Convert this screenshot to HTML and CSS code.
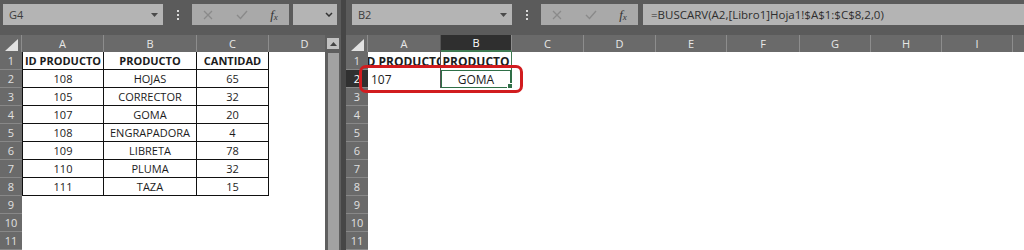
FILE: index.html
```html
<!DOCTYPE html>
<html lang="es">
<head>
    <meta charset="UTF-8">
    <title>BUSCARV entre libros</title>
    <link rel="stylesheet" href="styles.css">
</head>
<body>
<div class="app">
    <section class="pane left">
        <div class="toolbar">
            <div class="namebox"><span>G4</span><svg width="7" height="4"><polygon points="0,0 7,0 3.5,4" fill="#4a4a4a"/></svg></div>
            <div class="grip"><i></i><i></i><i></i></div>
            <div class="fxbox">
                <svg width="10" height="10"><path d="M1 1L9 9M9 1L1 9" stroke="#8a8a8a" stroke-width="1.3"/></svg>
                <svg width="12" height="10"><polyline points="1,5 4.5,8.5 11,1" fill="none" stroke="#8a8a8a" stroke-width="1.4"/></svg>
                <span class="fx"><i>f</i><sub>x</sub></span>
            </div>
            <div class="formula short"><svg width="8" height="5"><polyline points="1,1 4,4 7,1" fill="none" stroke="#333" stroke-width="1.5"/></svg></div>
        </div>
        <div class="body">
            <div class="sheet">
                <div class="row head">
                    <div class="corner"><svg width="13" height="12"><polygon points="0,12 13,12 13,0" fill="#e2e2e2"/></svg></div>
                    <div class="c ch a">A</div>
                    <div class="c ch b">B</div>
                    <div class="c ch cc">C</div>
                    <div class="c ch d">D</div>
                </div>
                <div class="row"><div class="rh">1</div><div class="c t a first bold">ID PRODUCTO</div><div class="c t b bold">PRODUCTO</div><div class="c t cc bold">CANTIDAD</div></div>
                <div class="row"><div class="rh">2</div><div class="c t a first">108</div><div class="c t b">HOJAS</div><div class="c t cc">65</div></div>
                <div class="row"><div class="rh">3</div><div class="c t a first">105</div><div class="c t b">CORRECTOR</div><div class="c t cc">32</div></div>
                <div class="row"><div class="rh">4</div><div class="c t a first">107</div><div class="c t b">GOMA</div><div class="c t cc">20</div></div>
                <div class="row"><div class="rh">5</div><div class="c t a first">108</div><div class="c t b">ENGRAPADORA</div><div class="c t cc">4</div></div>
                <div class="row"><div class="rh">6</div><div class="c t a first">109</div><div class="c t b">LIBRETA</div><div class="c t cc">78</div></div>
                <div class="row"><div class="rh">7</div><div class="c t a first">110</div><div class="c t b">PLUMA</div><div class="c t cc">32</div></div>
                <div class="row"><div class="rh">8</div><div class="c t a first">111</div><div class="c t b">TAZA</div><div class="c t cc">15</div></div>
                <div class="row"><div class="rh">9</div></div>
                <div class="row"><div class="rh">10</div></div>
                <div class="row"><div class="rh">11</div></div>
            </div>
            <div class="vscroll">
                <div class="up"><svg width="7" height="4"><polygon points="0,4 7,4 3.5,0" fill="#444"/></svg></div>
                <div class="thumb"></div>
            </div>
        </div>
    </section>

    <section class="pane right">
        <div class="toolbar">
            <div class="namebox"><span>B2</span><svg width="7" height="4"><polygon points="0,0 7,0 3.5,4" fill="#4a4a4a"/></svg></div>
            <div class="grip"><i></i><i></i><i></i></div>
            <div class="fxbox">
                <svg width="10" height="10"><path d="M1 1L9 9M9 1L1 9" stroke="#8a8a8a" stroke-width="1.3"/></svg>
                <svg width="12" height="10"><polyline points="1,5 4.5,8.5 11,1" fill="none" stroke="#8a8a8a" stroke-width="1.4"/></svg>
                <span class="fx"><i>f</i><sub>x</sub></span>
            </div>
            <div class="formula">=BUSCARV(A2,[Libro1]Hoja1!$A$1:$C$8,2,0)</div>
        </div>
        <div class="body">
            <div class="sheet">
                <div class="row head">
                    <div class="corner"><svg width="13" height="12"><polygon points="0,12 13,12 13,0" fill="#e2e2e2"/></svg></div>
                    <div class="c ch a">A</div>
                    <div class="c ch b active">B</div>
                    <div class="c ch cc">C</div>
                    <div class="c ch d">D</div>
                    <div class="c ch e">E</div>
                    <div class="c ch f">F</div>
                    <div class="c ch g">G</div>
                    <div class="c ch h">H</div>
                    <div class="c ch i">I</div>
                    <div class="c ch j"></div>
                </div>
                <div class="row"><div class="rh">1</div><div class="c a bold"><span>ID PRODUCTO</span></div><div class="c b bold col-b"><span>PRODUCTO</span></div></div>
                <div class="row"><div class="rh active">2</div><div class="c a num">107</div><div class="c b picked">GOMA</div></div>
                <div class="row"><div class="rh">3</div></div>
                <div class="row"><div class="rh">4</div></div>
                <div class="row"><div class="rh">5</div></div>
                <div class="row"><div class="rh">6</div></div>
                <div class="row"><div class="rh">7</div></div>
                <div class="row"><div class="rh">8</div></div>
                <div class="row"><div class="rh">9</div></div>
                <div class="row"><div class="rh">10</div></div>
                <div class="row"><div class="rh">11</div></div>
                <div class="mark"></div>
            </div>
        </div>
    </section>
</div>
</body>
</html>
```

FILE: styles.css
```css
body {
    margin: 0;
    background-color: #464646;
    font-family: "Open Sans", "Liberation Sans", sans-serif;
}

.app {
    display: flex;
    gap: 5px;
    height: 250px;
    overflow: hidden;
}

.pane {
    display: flex;
    flex-direction: column;
    overflow: hidden;
}

.left {
    width: 341px;
    flex: none;
}

.right {
    flex: 1;
    min-width: 0;
}

/* formula bar */

.toolbar {
    height: 35px;
    box-sizing: border-box;
    padding: 4px 0 0 3px;
    background-color: #5b5b5b;
    display: flex;
    align-items: flex-start;
    flex: none;
}

.right .toolbar {
    padding-left: 6px;
}

.namebox {
    width: 160px;
    height: 21px;
    box-sizing: border-box;
    padding: 0 5px 0 6px;
    background-color: #b4b4b4;
    color: #3d3d3d;
    font-size: 11px;
    display: flex;
    align-items: center;
    justify-content: space-between;
    flex: none;
}

.grip {
    width: 29px;
    height: 21px;
    display: flex;
    flex-direction: column;
    align-items: center;
    justify-content: center;
    gap: 2px;
    flex: none;
}

.grip i {
    width: 2px;
    height: 2px;
    background-color: #d8d8d8;
}

.fxbox {
    width: 97px;
    height: 21px;
    background-color: #a9a9a9;
    display: flex;
    align-items: center;
    justify-content: space-around;
    flex: none;
}

.fx {
    font-family: "Liberation Serif", serif;
    font-size: 13px;
    color: #333;
    line-height: 1;
}

.fx sub {
    font-size: 9px;
    font-style: italic;
    vertical-align: -1px;
}

.formula {
    flex: 1;
    height: 21px;
    margin-left: 5px;
    padding-left: 8px;
    background-color: #b4b4b4;
    color: #2e2e2e;
    font-size: 11.5px;
    line-height: 21px;
    white-space: nowrap;
    overflow: hidden;
}

.formula.short {
    margin: 0 4px 0 4px;
    padding: 0 4px 0 0;
    display: flex;
    align-items: center;
    justify-content: flex-end;
}

/* sheet */

.body {
    flex: 1;
    display: flex;
    min-height: 0;
}

.sheet {
    flex: 1;
    background-color: #fff;
    position: relative;
    overflow: hidden;
}

.row {
    display: flex;
    height: 18px;
}

.row.head {
    height: 17px;
    background-color: #6a6a6a;
}

.corner {
    width: 22px;
    flex: none;
    box-sizing: border-box;
    padding: 3px 3px 0 0;
    display: flex;
    justify-content: flex-end;
    align-items: center;
    border-right: 1px solid #8d8d8d;
}

.rh {
    width: 22px;
    flex: none;
    box-sizing: border-box;
    background-color: #6a6a6a;
    color: #e0e0e0;
    font-size: 11px;
    border-bottom: 1px solid #888;
    display: flex;
    align-items: center;
    justify-content: center;
}

.rh.active {
    background-color: #303030;
    color: #fff;
}

.c {
    flex: none;
    height: 18px;
    box-sizing: border-box;
    display: flex;
    align-items: center;
    justify-content: center;
    font-size: 11px;
    color: #1c1c1c;
    white-space: nowrap;
    overflow: hidden;
}

.ch {
    height: 17px;
    color: #e8e8e8;
    border-right: 1px solid #8d8d8d;
}

.ch.active {
    background-color: #2f2f2f;
    color: #fff;
    border-bottom: 2px solid #3f7a52;
}

.bold {
    font-weight: bold;
}

.t {
    border-right: 1px solid #111;
    border-bottom: 1px solid #111;
}

.t.first {
    border-left: 1px solid #111;
}

.left .a { width: 82px; }
.left .b { width: 93px; }
.left .cc { width: 72px; }
.left .d { width: 72px; }

.right .c { font-size: 12px; }
.right .ch { font-size: 11px; }
.right .a { width: 73px; }
.right .b { width: 71px; }
.right .cc { width: 72px; }
.right .d { width: 72px; }
.right .e { width: 71px; }
.right .f { width: 73px; }
.right .g { width: 71px; }
.right .h { width: 71px; }
.right .i { width: 71px; }
.right .j { width: 71px; }

.right .row .a {
    border-right: 1px solid #555;
}

.col-b {
    border-right: 1px solid #3f7a52;
}

.num {
    justify-content: flex-start;
    padding-left: 3px;
}

.picked {
    border: 1px solid #2f6f47;
    border-right-width: 2px;
    overflow: visible;
    position: relative;
}

.picked::after {
    content: "";
    position: absolute;
    right: -3px;
    bottom: -2px;
    width: 4px;
    height: 4px;
    background-color: #2f6f47;
    border: 1px solid #fff;
}

/* red highlight drawn over A2:B2 */
.mark {
    position: absolute;
    left: 13px;
    top: 30px;
    width: 164px;
    height: 28px;
    box-sizing: border-box;
    border: 3px solid #d11c1f;
    border-radius: 7px;
}

.vscroll {
    width: 16px;
    flex: none;
    background-color: #5e5e5e;
    display: flex;
    flex-direction: column;
    align-items: center;
    padding-top: 3px;
    gap: 4px;
}

.up {
    width: 12px;
    height: 11px;
    background-color: #c2c2c2;
    display: flex;
    align-items: center;
    justify-content: center;
}

.thumb {
    flex: 1;
    width: 11px;
    background-color: #a2a2a2;
}
```
